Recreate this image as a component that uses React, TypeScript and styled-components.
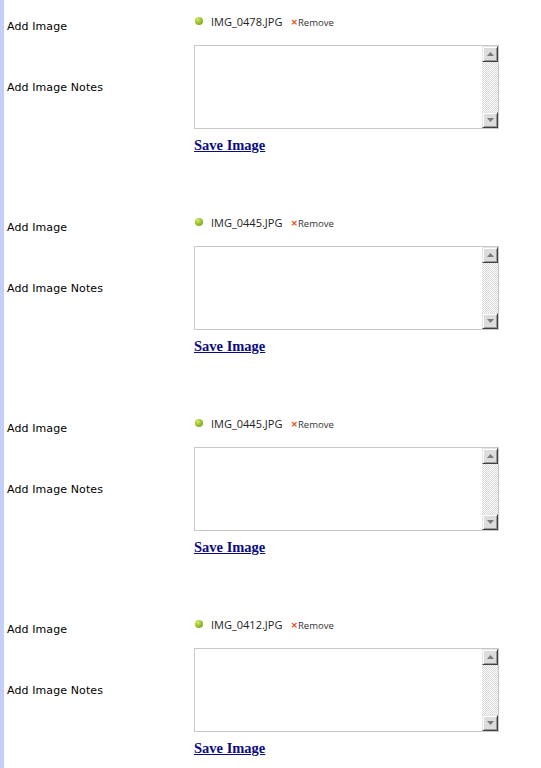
import React from 'react'
import styled, { createGlobalStyle } from 'styled-components'

const GlobalStyle = createGlobalStyle`
  html, body {
    margin: 0;
    padding: 0;
    background: #fff;
  }
`

const Page = styled.div`
  min-height: 100vh;
  border-left: 4px solid #c3cff8;
  box-sizing: border-box;
`

const Section = styled.div`
  display: grid;
  grid-template-columns: 190px 305px;
  grid-template-rows: 37px 84px auto;
  padding: 8px 0 48px;

  &:last-child {
    padding-bottom: 8px;
  }
`

const Label = styled.div`
  align-self: center;
  padding-left: 3px;
  font-family: 'DejaVu Sans', Verdana, sans-serif;
  font-size: 11px;
  letter-spacing: 0.1px;
  line-height: 14px;
  color: #000;
`

const NotesLabel = styled(Label)`
  padding-top: 2px;
`

const FileRow = styled.div`
  align-self: start;
  display: flex;
  align-items: center;
  padding-top: 6px;
  height: 14px;
  font-family: 'Open Sans', sans-serif;
`

const Dot = styled.span`
  width: 8px;
  height: 8px;
  border-radius: 50%;
  margin-left: 1px;
  margin-right: 8px;
  background: radial-gradient(circle at 35% 30%, #d4ee6a 0%, #9cc42c 45%, #6e9516 100%);
`

const FileName = styled.span`
  font-size: 11px;
  color: #222;
  margin-right: 8px;
`

const RemoveLink = styled.span`
  display: flex;
  align-items: center;
  font-size: 9.5px;
  color: #333;
  padding-top: 2px;
`

const Cross = styled.span`
  color: #e8480c;
  font-weight: bold;
  font-size: 9px;
  font-family: 'DejaVu Sans', sans-serif;
`

const NotesBox = styled.div`
  display: flex;
  border: 1px solid #c8c8c8;
  box-sizing: border-box;
  height: 84px;
  background: #fff;
`

const Notes = styled.textarea`
  flex: 1;
  border: none;
  outline: none;
  resize: none;
  overflow: hidden;
  padding: 2px;
  font-family: 'DejaVu Sans', sans-serif;
  font-size: 11px;
`

const ScrollBar = styled.div`
  width: 16px;
  display: flex;
  flex-direction: column;
  justify-content: space-between;
  background: repeating-conic-gradient(#d6d6d6 0 25%, #fff 0 50%) 0 0 / 2px 2px;
`

const ScrollButton = styled.div`
  width: 16px;
  height: 16px;
  box-sizing: border-box;
  background: #dcdcdc;
  border-top: 1px solid #e6e6e6;
  border-left: 1px solid #e6e6e6;
  border-right: 1px solid #404040;
  border-bottom: 1px solid #404040;
  box-shadow: inset 1px 1px 0 #fff, inset -1px -1px 0 #9a9a9a;
  display: flex;
  align-items: center;
  justify-content: center;
`

const SaveLink = styled.a`
  grid-column: 2;
  margin-top: 8px;
  font-family: 'Liberation Serif', 'Times New Roman', serif;
  font-weight: bold;
  font-size: 14.5px;
  line-height: 16px;
  color: #0b0b80;
  text-decoration: underline;
  width: fit-content;
  cursor: pointer;
`

function Arrow({ up }: { up?: boolean }) {
  return (
    <svg width="7" height="4" viewBox="0 0 7 4">
      <polygon points={up ? '3.5,0 7,4 0,4' : '0,0 7,0 3.5,4'} fill="#7a7a7a" />
    </svg>
  )
}

const files = ['IMG_0478.JPG', 'IMG_0445.JPG', 'IMG_0445.JPG', 'IMG_0412.JPG']

function ImageEntry({ file }: { file: string }) {
  return (
    <Section>
      <Label>Add Image</Label>
      <FileRow>
        <Dot />
        <FileName>{file}</FileName>
        <RemoveLink>
          <Cross>×</Cross>Remove
        </RemoveLink>
      </FileRow>
      <NotesLabel>Add Image Notes</NotesLabel>
      <NotesBox>
        <Notes />
        <ScrollBar>
          <ScrollButton>
            <Arrow up />
          </ScrollButton>
          <ScrollButton>
            <Arrow />
          </ScrollButton>
        </ScrollBar>
      </NotesBox>
      <SaveLink>Save Image</SaveLink>
    </Section>
  )
}

export default function App() {
  return (
    <>
      <GlobalStyle />
      <Page>
        {files.map((f, i) => (
          <ImageEntry key={i} file={f} />
        ))}
      </Page>
    </>
  )
}
